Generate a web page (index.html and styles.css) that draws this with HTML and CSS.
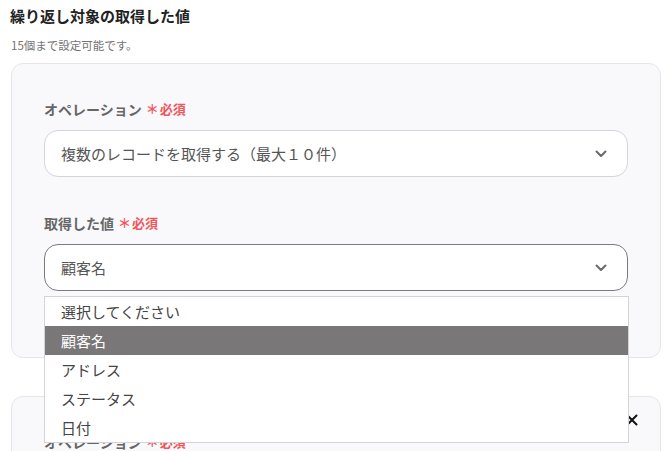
FILE: index.html
```html
<!DOCTYPE html>
<html lang="ja">
<head>
<meta charset="utf-8">
<link rel="stylesheet" href="styles.css">
</head>
<body>
<div class="page">
  <h2 class="title">繰り返し対象の取得した値</h2>
  <p class="sub">15個まで設定可能です。</p>

  <div class="card">
    <div class="field">
      <div class="label">オペレーション<span class="req"><span class="ast">＊</span>必須</span></div>
      <div class="select">
        <span class="val">複数のレコードを取得する（最大１０件）</span>
        <svg class="chev" width="12" height="8" viewBox="0 0 12 8"><path d="M1.5 1.5 L6 6 L10.5 1.5" fill="none" stroke="#6a6a6a" stroke-width="2" stroke-linecap="round" stroke-linejoin="round"/></svg>
      </div>
    </div>
    <div class="field field2">
      <div class="label">取得した値<span class="req"><span class="ast">＊</span>必須</span></div>
      <div class="select active">
        <span class="val">顧客名</span>
        <svg class="chev" width="12" height="8" viewBox="0 0 12 8"><path d="M1.5 1.5 L6 6 L10.5 1.5" fill="none" stroke="#6a6a6a" stroke-width="2" stroke-linecap="round" stroke-linejoin="round"/></svg>
        <ul class="menu">
          <li>選択してください</li>
          <li class="on">顧客名</li>
          <li>アドレス</li>
          <li>ステータス</li>
          <li>日付</li>
        </ul>
      </div>
    </div>
  </div>

  <div class="card card2">
    <svg class="close" width="12" height="12" viewBox="0 0 12 12"><path d="M1.5 1.5 L10.5 10.5 M10.5 1.5 L1.5 10.5" stroke="#111" stroke-width="2" stroke-linecap="round"/></svg>
    <div class="field">
      <div class="label">オペレーション<span class="req"><span class="ast">＊</span>必須</span></div>
    </div>
  </div>
</div>
</body>
</html>
```

FILE: styles.css
```css
html, body {
  margin: 0;
  padding: 0;
  background: #ffffff;
}
body {
  font-family: "Noto Sans CJK JP", "Noto Sans", sans-serif;
  overflow: hidden;
  height: 451px;
}
.page {
  padding: 5px 10px 0 10px;
}
.title {
  margin: 0;
  font-size: 15px;
  line-height: 22px;
  font-weight: 700;
  color: #222;
}
.sub {
  margin: 10px 0 0 1px;
  font-size: 11.5px;
  line-height: 16px;
  color: #747474;
}
.card {
  position: relative;
  margin-top: 10px;
  margin-left: 1px;
  width: 650px;
  box-sizing: border-box;
  background: #f9f8fb;
  border: 1px solid #e6e5ea;
  border-radius: 12px;
  padding: 35px 32px 66px 32px;
}
.card2 {
  margin-top: 38px;
  padding-top: 35px;
  height: 120px;
}
.label {
  font-size: 14px;
  line-height: 20px;
  font-weight: 700;
  color: #666;
  display: flex;
  align-items: center;
}
.req {
  margin-left: 4px;
  font-size: 13px;
  font-weight: 700;
  color: #f2555a;
  display: flex;
  align-items: center;
}
.ast {
  font-size: 13px;
  margin-right: 1px;
}
.field2 {
  margin-top: 36px;
}
.select {
  position: relative;
  margin-top: 11px;
  height: 47px;
  box-sizing: border-box;
  background: #fff;
  border: 1px solid #d3d5dc;
  border-radius: 14px;
  display: flex;
  align-items: center;
  padding: 0 16px;
}
.select.active {
  border-color: #7b7b7e;
}
.val {
  font-size: 15px;
  color: #555;
  flex: 1;
}
.chev {
  margin-right: 4px;
}
.menu {
  position: absolute;
  left: -1px;
  top: 51px;
  width: 585px;
  box-sizing: border-box;
  margin: 0;
  padding: 0;
  list-style: none;
  background: #fff;
  border: 1px solid #d4d4d8;
  z-index: 5;
}
.menu li {
  height: 29px;
  line-height: 29px;
  padding-left: 16px;
  font-size: 15px;
  color: #444;
}
.menu li.on {
  background: #7a7779;
  color: #fff;
}
.close {
  position: absolute;
  right: 22px;
  top: 17px;
}
```
